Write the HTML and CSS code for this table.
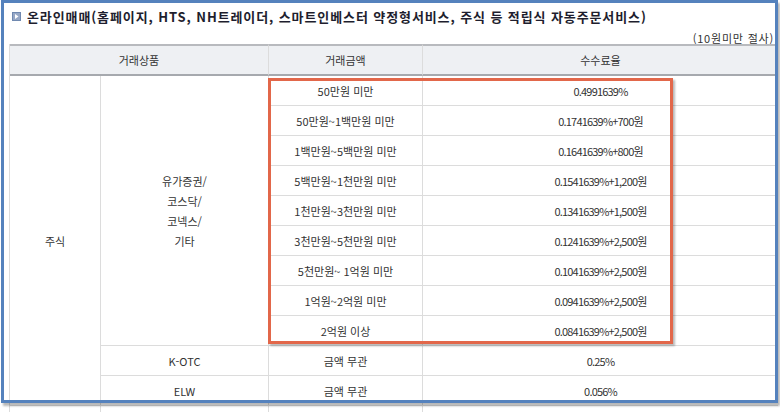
FILE: index.html
```html
<!DOCTYPE html>
<html lang="ko">
<head>
<meta charset="utf-8">
<title>온라인매매 수수료</title>
<link rel="stylesheet" href="styles.css">
</head>
<body>
<div class="page">
  <div class="title">
    <span class="bullet"><svg width="9" height="9" viewBox="0 0 9 9"><rect x="0.5" y="0.5" width="8" height="8" fill="#97a8c6" stroke="#7089b0"/><path d="M3 2 L6.5 4.5 L3 7 Z" fill="#fff"/></svg></span>
    <span class="title-text">온라인매매(홈페이지, HTS, NH트레이더, 스마트인베스터 약정형서비스, 주식 등 적립식 자동주문서비스)</span>
  </div>
  <div class="note">(10원미만 절사)</div>
  <div class="grid">
    <div class="th c-prod">거래상품</div>
    <div class="th">거래금액</div>
    <div class="th last">수수료율</div>

    <div class="td c-stock">주식</div>
    <div class="td c-sub">유가증권/<br>코스닥/<br>코넥스/<br>기타</div>

    <div class="td">50만원 미만</div><div class="td fee last">0.4991639%</div>
    <div class="td">50만원~1백만원 미만</div><div class="td fee last">0.1741639%+700원</div>
    <div class="td">1백만원~5백만원 미만</div><div class="td fee last">0.1641639%+800원</div>
    <div class="td">5백만원~1천만원 미만</div><div class="td fee last">0.1541639%+1,200원</div>
    <div class="td">1천만원~3천만원 미만</div><div class="td fee last">0.1341639%+1,500원</div>
    <div class="td">3천만원~5천만원 미만</div><div class="td fee last">0.1241639%+2,500원</div>
    <div class="td">5천만원~ 1억원 미만</div><div class="td fee last">0.1041639%+2,500원</div>
    <div class="td">1억원~2억원 미만</div><div class="td fee last">0.0941639%+2,500원</div>
    <div class="td">2억원 이상</div><div class="td fee last">0.0841639%+2,500원</div>

    <div class="td">K-OTC</div><div class="td">금액 무관</div><div class="td fee last">0.25%</div>
    <div class="td">ELW</div><div class="td">금액 무관</div><div class="td fee last">0.056%</div>

    <div class="td tail"></div><div class="td tail"></div><div class="td tail"></div><div class="td tail last"></div>
  </div>
  <div class="mark-orange"></div>
  <div class="mark-blue"></div>
</div>
</body>
</html>
```
FILE: styles.css
```css
html, body {
  margin: 0;
  padding: 0;
  background: #fff;
}
body {
  width: 780px;
  height: 412px;
  overflow: hidden;
  font-family: "Noto Sans CJK KR", "Noto Sans", sans-serif;
  color: #333;
}
.page {
  position: relative;
  width: 780px;
  height: 412px;
}
.title {
  height: 32px;
  display: flex;
  align-items: center;
  padding-left: 12px;
}
.bullet {
  display: flex;
  width: 9px;
  height: 9px;
  margin-right: 6px;
}
.title-text {
  font-size: 13px;
  font-weight: bold;
  color: #1e1e2e;
  letter-spacing: 0.9px;
  white-space: nowrap;
}
.note {
  height: 12px;
  line-height: 12px;
  width: 765px;
  margin-left: 9px;
  padding-right: 4px;
  text-align: right;
  font-size: 11px;
  letter-spacing: 0.8px;
  color: #333;
}
.grid {
  display: grid;
  grid-template-columns: 91px 168px 154px 355px;
  grid-template-rows: 32px repeat(11, 30px) 6px;
  margin-left: 9px;
  border-left: 1px solid #dcdcdc;
  width: 768px;
  font-size: 11px;
}
.th, .td {
  box-sizing: border-box;
  display: flex;
  align-items: center;
  justify-content: center;
  text-align: center;
  border-right: 1px solid #dcdcdc;
  white-space: nowrap;
}
.th {
  grid-row: 1;
  background: #eef0f3;
  border-top: 2px solid #b8babe;
  border-bottom: 2px solid #a6a9ae;
  color: #333;
}
.td {
  border-bottom: 1px solid #dcdcdc;
}
.tail {
  border-bottom: none;
}
.c-prod {
  grid-column: 1 / 3;
}
.c-stock {
  grid-column: 1;
  grid-row: 2 / span 11;
}
.c-sub {
  grid-column: 2;
  grid-row: 2 / span 9;
  line-height: 20px;
}
.fee {
  letter-spacing: -0.8px;
}
.last {
  border-right: none;
}
.mark-orange {
  position: absolute;
  left: 268px;
  top: 78px;
  width: 405px;
  height: 266px;
  box-sizing: border-box;
  border: 3px solid #e2674a;
  box-shadow: 2px 2px 2px rgba(0, 0, 0, 0.28);
}
.mark-blue {
  position: absolute;
  left: 1px;
  top: 0;
  width: 777px;
  height: 403px;
  box-sizing: border-box;
  border: 3px solid #5582bd;
  box-shadow: 2px 3px 2px rgba(0, 0, 0, 0.28);
}
```
